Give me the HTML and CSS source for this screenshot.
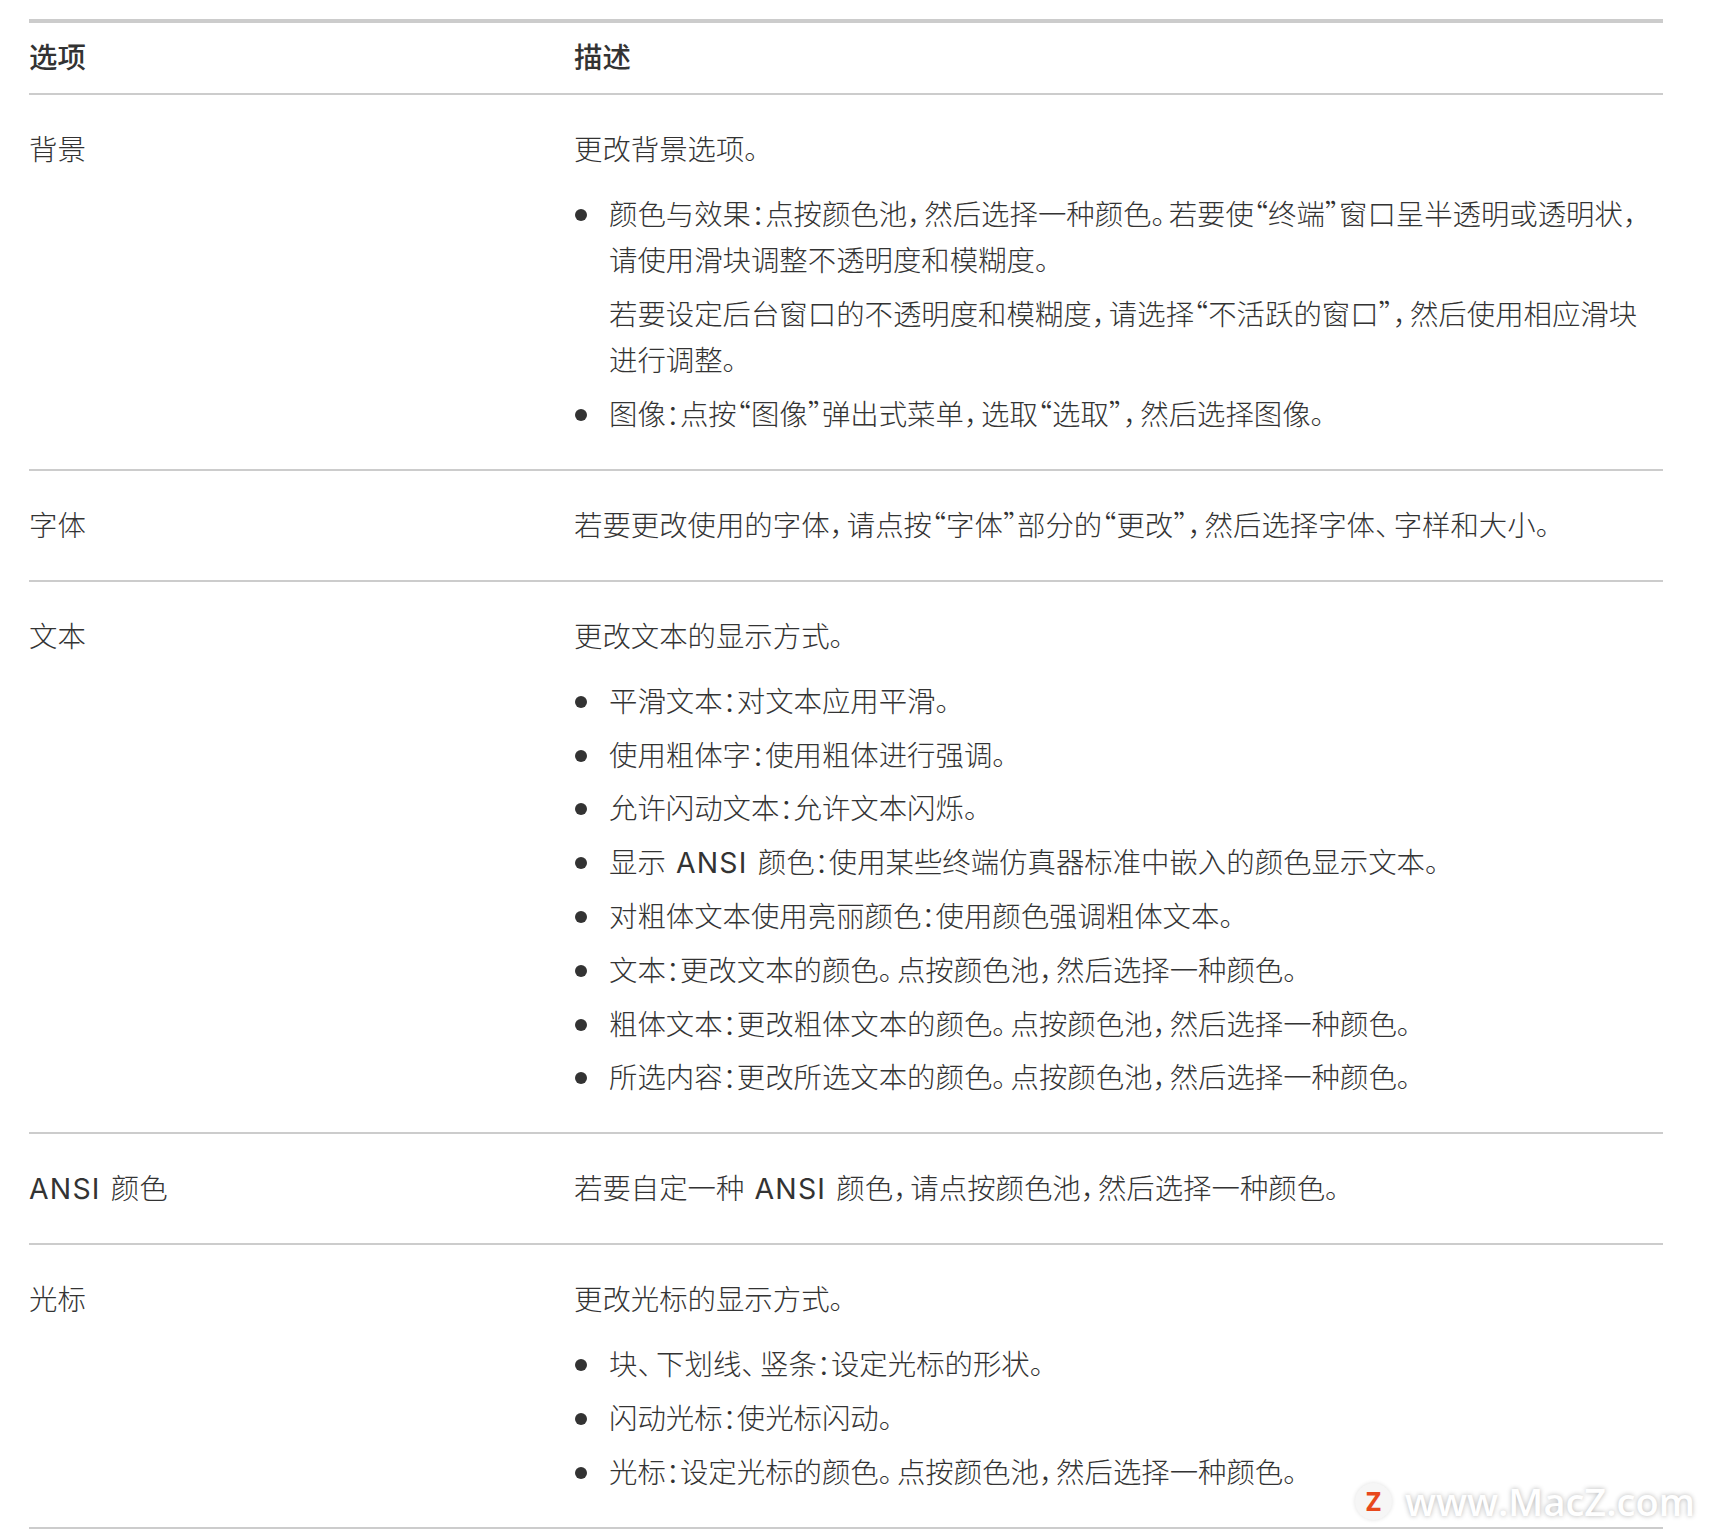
FILE: index.html
```html
<!DOCTYPE html>
<html lang="zh-CN">
<head>
<meta charset="utf-8">
<title>终端描述文件</title>
<link rel="stylesheet" href="styles.css">
</head>
<body>
<table class="options">
<thead>
<tr><th class="col-name">选项</th><th>描述</th></tr>
</thead>
<tbody>
<tr><td>背景</td><td>
<p>更改背景选项<span class="pd">。</span></p>
<ul>
<li><p>颜色与效果：点按颜色池<span class="pn">，</span>然后选择一种颜色<span class="pn">。</span>若要使“终端”窗口呈半透明或透明状<span class="pn">，</span>请使用滑块调整不透明度和模糊度<span class="pd">。</span></p><p>若要设定后台窗口的不透明度和模糊度<span class="pn">，</span>请选择“不活跃的窗口”<span class="pn">，</span>然后使用相应滑块进行调整<span class="pd">。</span></p></li>
<li>图像：点按“图像”弹出式菜单<span class="pn">，</span>选取“选取”<span class="pn">，</span>然后选择图像<span class="pd">。</span></li>
</ul>
</td></tr>
<tr><td>字体</td><td><p>若要更改使用的字体<span class="pn">，</span>请点按“字体”部分的“更改”<span class="pn">，</span>然后选择字体<span class="pk">、</span>字样和大小<span class="pd">。</span></p></td></tr>
<tr><td>文本</td><td>
<p>更改文本的显示方式<span class="pd">。</span></p>
<ul>
<li>平滑文本：对文本应用平滑<span class="pd">。</span></li>
<li>使用粗体字：使用粗体进行强调<span class="pd">。</span></li>
<li>允许闪动文本：允许文本闪烁<span class="pd">。</span></li>
<li>显示<span class="latin"> ANSI </span>颜色：使用某些终端仿真器标准中嵌入的颜色显示文本<span class="pd">。</span></li>
<li>对粗体文本使用亮丽颜色：使用颜色强调粗体文本<span class="pd">。</span></li>
<li>文本：更改文本的颜色<span class="pd">。</span>点按颜色池<span class="pn">，</span>然后选择一种颜色<span class="pd">。</span></li>
<li>粗体文本：更改粗体文本的颜色<span class="pd">。</span>点按颜色池<span class="pn">，</span>然后选择一种颜色<span class="pd">。</span></li>
<li>所选内容：更改所选文本的颜色<span class="pd">。</span>点按颜色池<span class="pn">，</span>然后选择一种颜色<span class="pd">。</span></li>
</ul>
</td></tr>
<tr><td><span class="latin">ANSI </span>颜色</td><td><p>若要自定一种<span class="latin"> ANSI </span>颜色<span class="pn">，</span>请点按颜色池<span class="pn">，</span>然后选择一种颜色<span class="pd">。</span></p></td></tr>
<tr><td>光标</td><td>
<p>更改光标的显示方式<span class="pd">。</span></p>
<ul>
<li>块<span class="pk">、</span>下划线<span class="pk">、</span>竖条：设定光标的形状<span class="pd">。</span></li>
<li>闪动光标：使光标闪动<span class="pd">。</span></li>
<li>光标：设定光标的颜色<span class="pd">。</span>点按颜色池<span class="pn">，</span>然后选择一种颜色<span class="pd">。</span></li>
</ul>
</td></tr>
</tbody>
</table>
<div class="watermark"><span class="wm-logo">Z</span><span class="wm-text">www.MacZ.com</span></div>
</body>
</html>
```
FILE: styles.css
```css
html, body { margin: 0; padding: 0; background: #fff; }
body {
  position: relative;
  height: 1530px;
  overflow: hidden;
  padding: 19px 51px 0 29px;
  box-sizing: border-box;
  font-family: "Noto Sans CJK SC", sans-serif;
  font-size: 28.4px;
  font-weight: 300;
  line-height: 46px;
  color: #333;
  font-feature-settings: "halt";
}
.options { width: 100%; border-collapse: collapse; table-layout: fixed; border-top: 4px solid #ccc; }
.col-name { width: 545px; }
th { text-align: left; font-weight: 500; padding: 10px 0 14px; border-bottom: 2px solid #ccc; }
td { vertical-align: top; padding: 30px 0 33px; border-bottom: 2px solid #ccc; }
p { margin: 0; }
ul { list-style: none; margin: 19px 0 0; padding: 0 0 0 35px; }
li { position: relative; margin-top: 7.8px; }
li:first-child { margin-top: 0; }
li p + p { margin-top: 8px; }
li::before {
  content: "";
  position: absolute;
  left: -34px;
  top: 19px;
  width: 12px;
  height: 12px;
  border-radius: 50%;
  background: #333;
}
.pn { letter-spacing: 3px; }
.pd { letter-spacing: 4px; }
.pk { letter-spacing: 4.5px; }
.latin {
  font-family: "Inter", sans-serif;
  font-weight: 400;
  line-height: 0;
  letter-spacing: 1.2px;
  word-spacing: 1px;
  font-feature-settings: normal;
}
.watermark { position: absolute; left: 1355px; top: 1482px; display: flex; align-items: center; gap: 13px; }
.wm-logo {
  width: 37px; height: 37px; border-radius: 50%;
  background: #f6f6f6; color: #e8491d;
  box-shadow: 0 0 4px rgba(0,0,0,.12);
  display: flex; align-items: center; justify-content: center;
  font: 700 26px/1 "Open Sans", sans-serif;
  font-feature-settings: normal;
}
.wm-text {
  font: 600 38px/1 "Open Sans", sans-serif;
  color: #fff;
  font-feature-settings: normal;
  text-shadow: 0 0 5px rgba(0,0,0,.3);
}
```
